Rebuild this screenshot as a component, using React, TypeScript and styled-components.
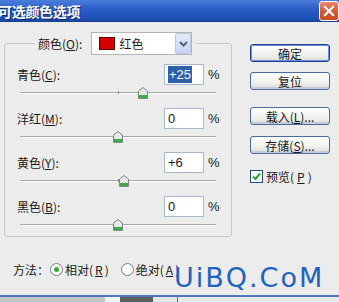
import React from 'react';
import styled, { createGlobalStyle } from 'styled-components';

const GlobalStyle = createGlobalStyle`
  html, body {
    margin: 0;
    padding: 0;
    background: #ececec;
  }
  body {
    font-family: "Liberation Sans", "Noto Sans CJK SC", sans-serif;
    font-size: 12px;
    color: #1a1a1a;
  }
`;

const Window = styled.div`
  position: relative;
  width: 339px;
  height: 302px;
  display: flex;
  flex-direction: column;
  overflow: hidden;
  background: #ececec;
`;

const TitleBar = styled.div`
  height: 22px;
  flex: none;
  display: flex;
  align-items: center;
  justify-content: space-between;
  background: linear-gradient(#4a7fdc 0%, #2a5cc8 45%, #2152bb 80%, #1c4aa8 100%);
  border-bottom: 1px solid #17408f;
  box-sizing: border-box;
`;

const Title = styled.div`
  margin-left: -2px;
  color: #fff;
  font-family: "Noto Sans CJK SC", sans-serif;
  font-weight: 700;
  font-size: 14px;
  letter-spacing: -0.3px;
  text-shadow: 1px 1px 0 #0c2a6a;
`;

const CloseButton = styled.div`
  width: 20px;
  height: 20px;
  box-sizing: border-box;
  border: 1px solid #fff;
  border-radius: 3px;
  background: linear-gradient(#e98a6c, #d85a35 50%, #c8471f);
  display: flex;
  align-items: center;
  justify-content: center;
`;

const Body = styled.div`
  flex: 1;
  display: flex;
`;

const LeftColumn = styled.div`
  width: 232px;
  padding-left: 4px;
  box-sizing: border-box;
  display: flex;
  flex-direction: column;
`;

const Group = styled.fieldset`
  margin: 10px 0 0 0;
  width: 228px;
  box-sizing: border-box;
  border: 1px solid #c9c9c9;
  border-radius: 3px;
  padding: 9px 5px 5px 12px;
  display: flex;
  flex-direction: column;
  gap: 9px;
`;

const Legend = styled.legend`
  margin-left: 17px;
  padding: 0 4px 0 4px;
`;

const LegendInner = styled.div`
  display: flex;
  align-items: center;
  gap: 9px;
`;

const Label = styled.span`
  font-family: "Noto Sans CJK SC", sans-serif;
  font-size: 12px;
  white-space: nowrap;
`;

const Key = styled.span`
  text-decoration: underline;
`;

const Select = styled.div`
  width: 101px;
  height: 23px;
  box-sizing: border-box;
  border: 1px solid #b5b5b5;
  background: #fff;
  display: flex;
  align-items: center;
  padding-left: 7px;
  gap: 4px;
`;

const Swatch = styled.div<{ $color: string }>`
  width: 16px;
  height: 13px;
  box-sizing: border-box;
  background: ${({ $color }) => $color};
  border: 1px solid #5a0000;
`;

const SelectText = styled.span`
  flex: 1;
  font-family: "Noto Sans CJK SC", sans-serif;
`;

const ArrowButton = styled.div`
  width: 16px;
  height: 21px;
  box-sizing: border-box;
  border: 1px solid #b9c7e6;
  border-radius: 2px;
  background: linear-gradient(#e3ebfb, #c6d4f2);
  display: flex;
  align-items: center;
  justify-content: center;
`;

const Row = styled.div`
  display: flex;
  flex-direction: column;
`;

const InputRow = styled.div`
  height: 21px;
  display: flex;
  align-items: center;
`;

const RowLabel = styled(Label)`
  flex: 1;
`;

const NumberBox = styled.div`
  width: 40px;
  height: 21px;
  box-sizing: border-box;
  border: 1px solid #a9b8cc;
  background: #fff;
  display: flex;
  align-items: center;
  padding-left: 3px;
  font-family: "Liberation Sans", sans-serif;
  font-size: 13px;
`;

const Selected = styled.span`
  background: #2f5fa8;
  color: #fff;
  padding: 1px 1px;
`;

const Percent = styled.span`
  width: 22px;
  padding-left: 4px;
  box-sizing: border-box;
  font-size: 13px;
`;

const SliderWrap = styled.div`
  position: relative;
  height: 14px;
  margin-left: 3px;
  width: 196px;
`;

const Track = styled.div`
  position: absolute;
  left: 0;
  right: 0;
  top: 7px;
  height: 1px;
  background: #a8a8a8;
  border-bottom: 1px solid #fafafa;
`;

const Tick = styled.div`
  position: absolute;
  left: 98px;
  top: 6px;
  width: 1px;
  height: 3px;
  background: #8a8a8a;
`;

const Thumb = styled.svg`
  position: absolute;
  top: 2px;
  width: 10px;
  height: 12px;
`;

const MethodRow = styled.div`
  margin-top: 25px;
  margin-left: 9px;
  display: flex;
  align-items: center;
  height: 14px;
`;

const RadioItem = styled.label`
  display: flex;
  align-items: center;
  gap: 2px;
  margin-left: 1px;
  margin-right: 11px;
  font-family: "Noto Sans CJK SC", sans-serif;
`;

const RadioCircle = styled.span<{ $on: boolean }>`
  width: 13px;
  height: 13px;
  box-sizing: border-box;
  border-radius: 50%;
  border: 1px solid #6a7f98;
  background: #fff;
  display: flex;
  align-items: center;
  justify-content: center;
  &::after {
    content: '';
    width: 5px;
    height: 5px;
    border-radius: 50%;
    background: ${({ $on }) => ($on ? '#3fa33a' : 'transparent')};
  }
`;

const RightColumn = styled.div`
  padding-left: 18px;
  padding-top: 22px;
  display: flex;
  flex-direction: column;
  width: 98px;
  box-sizing: border-box;
`;

const Button = styled.div<{ $default?: boolean; $gap: number }>`
  width: 80px;
  height: 18px;
  margin-bottom: ${({ $gap }) => $gap}px;
  box-sizing: border-box;
  border: 1px solid ${({ $default }) => ($default ? '#1f3e8c' : '#4b6a9e')};
  box-shadow: ${({ $default }) => ($default ? 'inset 0 0 0 1px #6e8fd6' : 'inset 0 -2px 0 #c5cbd8')};
  border-radius: 3px;
  background: linear-gradient(#ffffff, #f1f1ee 60%, #dcdcd8);
  display: flex;
  align-items: center;
  justify-content: center;
  font-family: "Noto Sans CJK SC", sans-serif;
  font-size: 12px;
`;

const CheckRow = styled.div`
  display: flex;
  align-items: center;
  gap: 3px;
  font-family: "Noto Sans CJK SC", sans-serif;
`;

const CheckBox = styled.span`
  width: 13px;
  height: 13px;
  box-sizing: border-box;
  border: 1px solid #1c5180;
  background: #fff;
  display: flex;
  align-items: center;
  justify-content: center;
`;

const Watermark = styled.div`
  position: absolute;
  left: 174px;
  top: 264px;
  font-family: "DejaVu Sans", sans-serif;
  font-size: 27px;
  letter-spacing: 2px;
  color: #1e63c4;
  line-height: 1;
`;

const BottomLine = styled.div`
  height: 2px;
  flex: none;
  background: #4b78bd;
`;

const Taskbar = styled.div`
  height: 5px;
  flex: none;
  display: flex;
`;

const Segment = styled.div<{ $w: number; $c: string }>`
  width: ${({ $w }) => $w}px;
  flex: ${({ $w }) => ($w ? 'none' : '1')};
  background: ${({ $c }) => $c};
`;

const sliders = [
  { label: '青色', key: 'C', value: 25, selected: true },
  { label: '洋红', key: 'M', value: 0, selected: false },
  { label: '黄色', key: 'Y', value: 6, selected: false },
  { label: '黑色', key: 'B', value: 0, selected: false },
];

function ThumbIcon() {
  return (
    <>
      <polygon points="5,0.5 9.5,4 9.5,11.5 0.5,11.5 0.5,4" fill="#e4e8e4" stroke="#7c8a80" strokeWidth="1" />
      <rect x="1" y="8" width="8" height="3" fill="#3ea84a" />
    </>
  );
}

export default function App() {
  return (
    <Window>
      <GlobalStyle />
      <TitleBar>
        <Title>可选颜色选项</Title>
        <CloseButton>
          <svg width="12" height="12" viewBox="0 0 12 12">
            <path d="M2 2 L10 10 M10 2 L2 10" stroke="#fff" strokeWidth="2.2" strokeLinecap="square" />
          </svg>
        </CloseButton>
      </TitleBar>
      <Body>
        <LeftColumn>
          <Group>
            <Legend>
              <LegendInner>
                <Label>
                  颜色(<Key>O</Key>):
                </Label>
                <Select>
                  <Swatch $color="#d40000" />
                  <SelectText>红色</SelectText>
                  <ArrowButton>
                    <svg width="9" height="6" viewBox="0 0 9 6">
                      <path d="M1 1 L4.5 4.5 L8 1" fill="none" stroke="#4d6185" strokeWidth="2" />
                    </svg>
                  </ArrowButton>
                </Select>
              </LegendInner>
            </Legend>
            {sliders.map((s) => (
              <Row key={s.key}>
                <InputRow>
                  <RowLabel>
                    {s.label}(<Key>{s.key}</Key>):
                  </RowLabel>
                  <NumberBox>
                    {s.selected ? <Selected>+{s.value}</Selected> : s.value > 0 ? `+${s.value}` : s.value}
                  </NumberBox>
                  <Percent>%</Percent>
                </InputRow>
                <SliderWrap>
                  <Track />
                  <Tick />
                  <Thumb viewBox="0 0 10 12" style={{ left: 98 + s.value * 0.98 - 5 }}>
                    <ThumbIcon />
                  </Thumb>
                </SliderWrap>
              </Row>
            ))}
          </Group>
          <MethodRow>
            <Label>方法：</Label>
            <RadioItem>
              <RadioCircle $on />
              相对(<Key>R</Key>)
            </RadioItem>
            <RadioItem>
              <RadioCircle $on={false} />
              绝对(<Key>A</Key>)
            </RadioItem>
          </MethodRow>
        </LeftColumn>
        <RightColumn>
          <Button $default $gap={10}>确定</Button>
          <Button $gap={17}>复位</Button>
          <Button $gap={11}>
            载入(<Key>L</Key>)...
          </Button>
          <Button $gap={14}>
            存储(<Key>S</Key>)...
          </Button>
          <CheckRow>
            <CheckBox>
              <svg width="9" height="9" viewBox="0 0 9 9">
                <path d="M1 4.5 L3.5 7 L8 1.5" fill="none" stroke="#2fa02f" strokeWidth="2" />
              </svg>
            </CheckBox>
            预览(<Key>P</Key>)
          </CheckRow>
        </RightColumn>
      </Body>
      <BottomLine />
      <Taskbar>
        <Segment $w={105} $c="#c4c4c4" />
        <Segment $w={15} $c="#f4f4f4" />
        <Segment $w={33} $c="#5e5e5e" />
        <Segment $w={24} $c="#e6e6e6" />
        <Segment $w={1} $c="#6a6a6a" />
        <Segment $w={0} $c="#e9e9e9" />
      </Taskbar>
      <Watermark>UiBQ.CoM</Watermark>
    </Window>
  );
}
